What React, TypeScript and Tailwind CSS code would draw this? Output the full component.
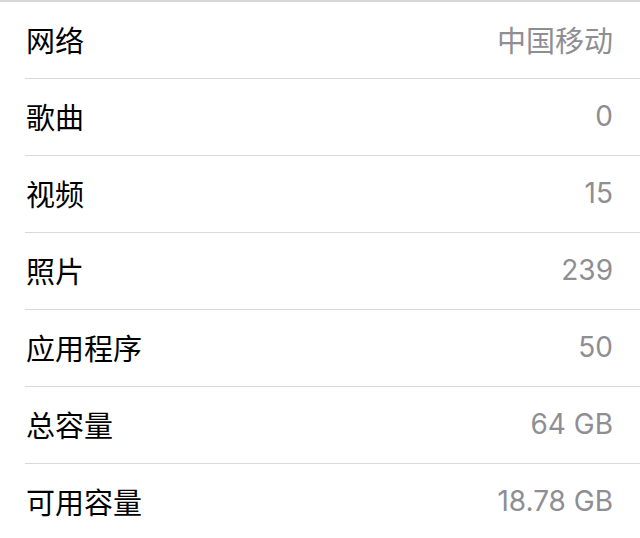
import React from "react";

const rows: [string, string][] = [
  ["网络", "中国移动"],
  ["歌曲", "0"],
  ["视频", "15"],
  ["照片", "239"],
  ["应用程序", "50"],
  ["总容量", "64 GB"],
  ["可用容量", "18.78 GB"],
];

const cjk = '"Noto Sans CJK SC", sans-serif';

export default function App() {
  return (
    <div
      className="w-[640px] h-[538px] overflow-hidden bg-white"
      style={{ fontFamily: '"Inter", "Noto Sans CJK SC", sans-serif' }}
    >
      <div className="h-[2px] bg-[#d6d6d6]" />
      {rows.map(([label, value], i) => (
        <div key={i} className="flex flex-col">
          <div className="h-[76px] flex items-center justify-between pl-[26px] pr-[27px]">
            <span className="text-[29px] leading-none text-black font-normal mt-[-2px]" style={{ fontFamily: cjk }}>
              {label}
            </span>
            {/^[\x00-\x7f]+$/.test(value) ? (
              <span className="text-[28px] leading-none text-[#8e8e93] mt-[-2px]">{value}</span>
            ) : (
              <span className="text-[29px] leading-none text-[#8e8e93] font-normal mt-[-2px]" style={{ fontFamily: cjk }}>
                {value}
              </span>
            )}
          </div>
          {i < rows.length - 1 && <div className="ml-[25px] h-px bg-[#d9d9d9]" />}
        </div>
      ))}
    </div>
  );
}
